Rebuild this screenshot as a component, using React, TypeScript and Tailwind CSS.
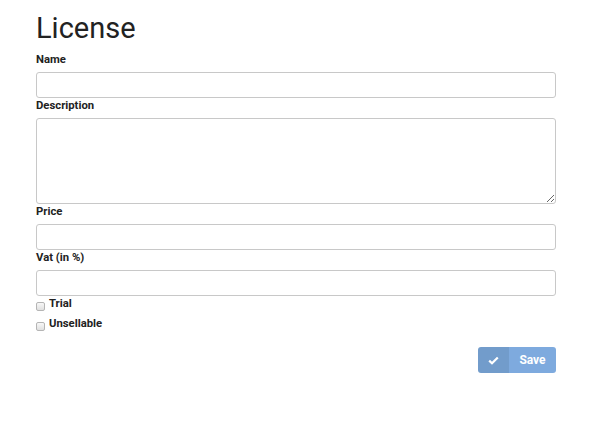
import React from "react";

const labelCls = "block text-[11.3px] font-bold text-[#222] leading-[14px]";
const inputCls = "block w-full h-[26px] border border-[#c8c8c8] rounded-[3px] bg-white";

export default function App() {
  return (
    <div className="w-[601px] h-[426px] bg-white" style={{ fontFamily: "Roboto, 'Liberation Sans', sans-serif" }}>
      <div className="pl-[36px] w-[556px] pt-[12px]">
        <h1 className="text-[29px] leading-[32px] text-[#222] font-normal">License</h1>
        <div className="mt-[9px]">
          <label className={labelCls}>Name</label>
          <input className={inputCls + " mt-[5px]"} />
        </div>
        <div className="mt-[1px]">
          <label className={labelCls}>Description</label>
          <textarea className="block w-full h-[86px] mt-[5px] border border-[#c8c8c8] rounded-[3px] bg-white" />
        </div>
        <div className="mt-[1px]">
          <label className={labelCls}>Price</label>
          <input className={inputCls + " mt-[5px]"} />
        </div>
        <div className="mt-[1px]">
          <label className={labelCls}>Vat (in %)</label>
          <input className={inputCls + " mt-[5px]"} />
        </div>
        <div className="flex items-center gap-[4px] h-[16px]">
          <span className="w-[9px] h-[9px] mt-[4px] border border-[#b5b5b5] rounded-[2px] bg-gradient-to-b from-[#f8f8f8] to-[#e0e0e0]" />
          <span className="text-[11.3px] font-bold text-[#222]">Trial</span>
        </div>
        <div className="mt-[4px] flex items-center gap-[4px] h-[16px]">
          <span className="w-[9px] h-[9px] mt-[4px] border border-[#b5b5b5] rounded-[2px] bg-gradient-to-b from-[#f8f8f8] to-[#e0e0e0]" />
          <span className="text-[11.3px] font-bold text-[#222]">Unsellable</span>
        </div>
        <div className="flex justify-end mt-[15px]">
          <button className="flex h-[26px] w-[78px] rounded-[3px] overflow-hidden text-white text-[12px] font-bold">
            <span className="w-[31px] bg-[#729ccb] flex items-center justify-center">
              <svg width="11" height="9" viewBox="0 0 11 9"><path d="M1.2 4.6 L4 7.3 L9.8 1.5" stroke="white" strokeWidth="2.2" fill="none" /></svg>
            </span>
            <span className="flex-1 bg-[#7eaade] flex items-center justify-center">Save</span>
          </button>
        </div>
      </div>
    </div>
  );
}
